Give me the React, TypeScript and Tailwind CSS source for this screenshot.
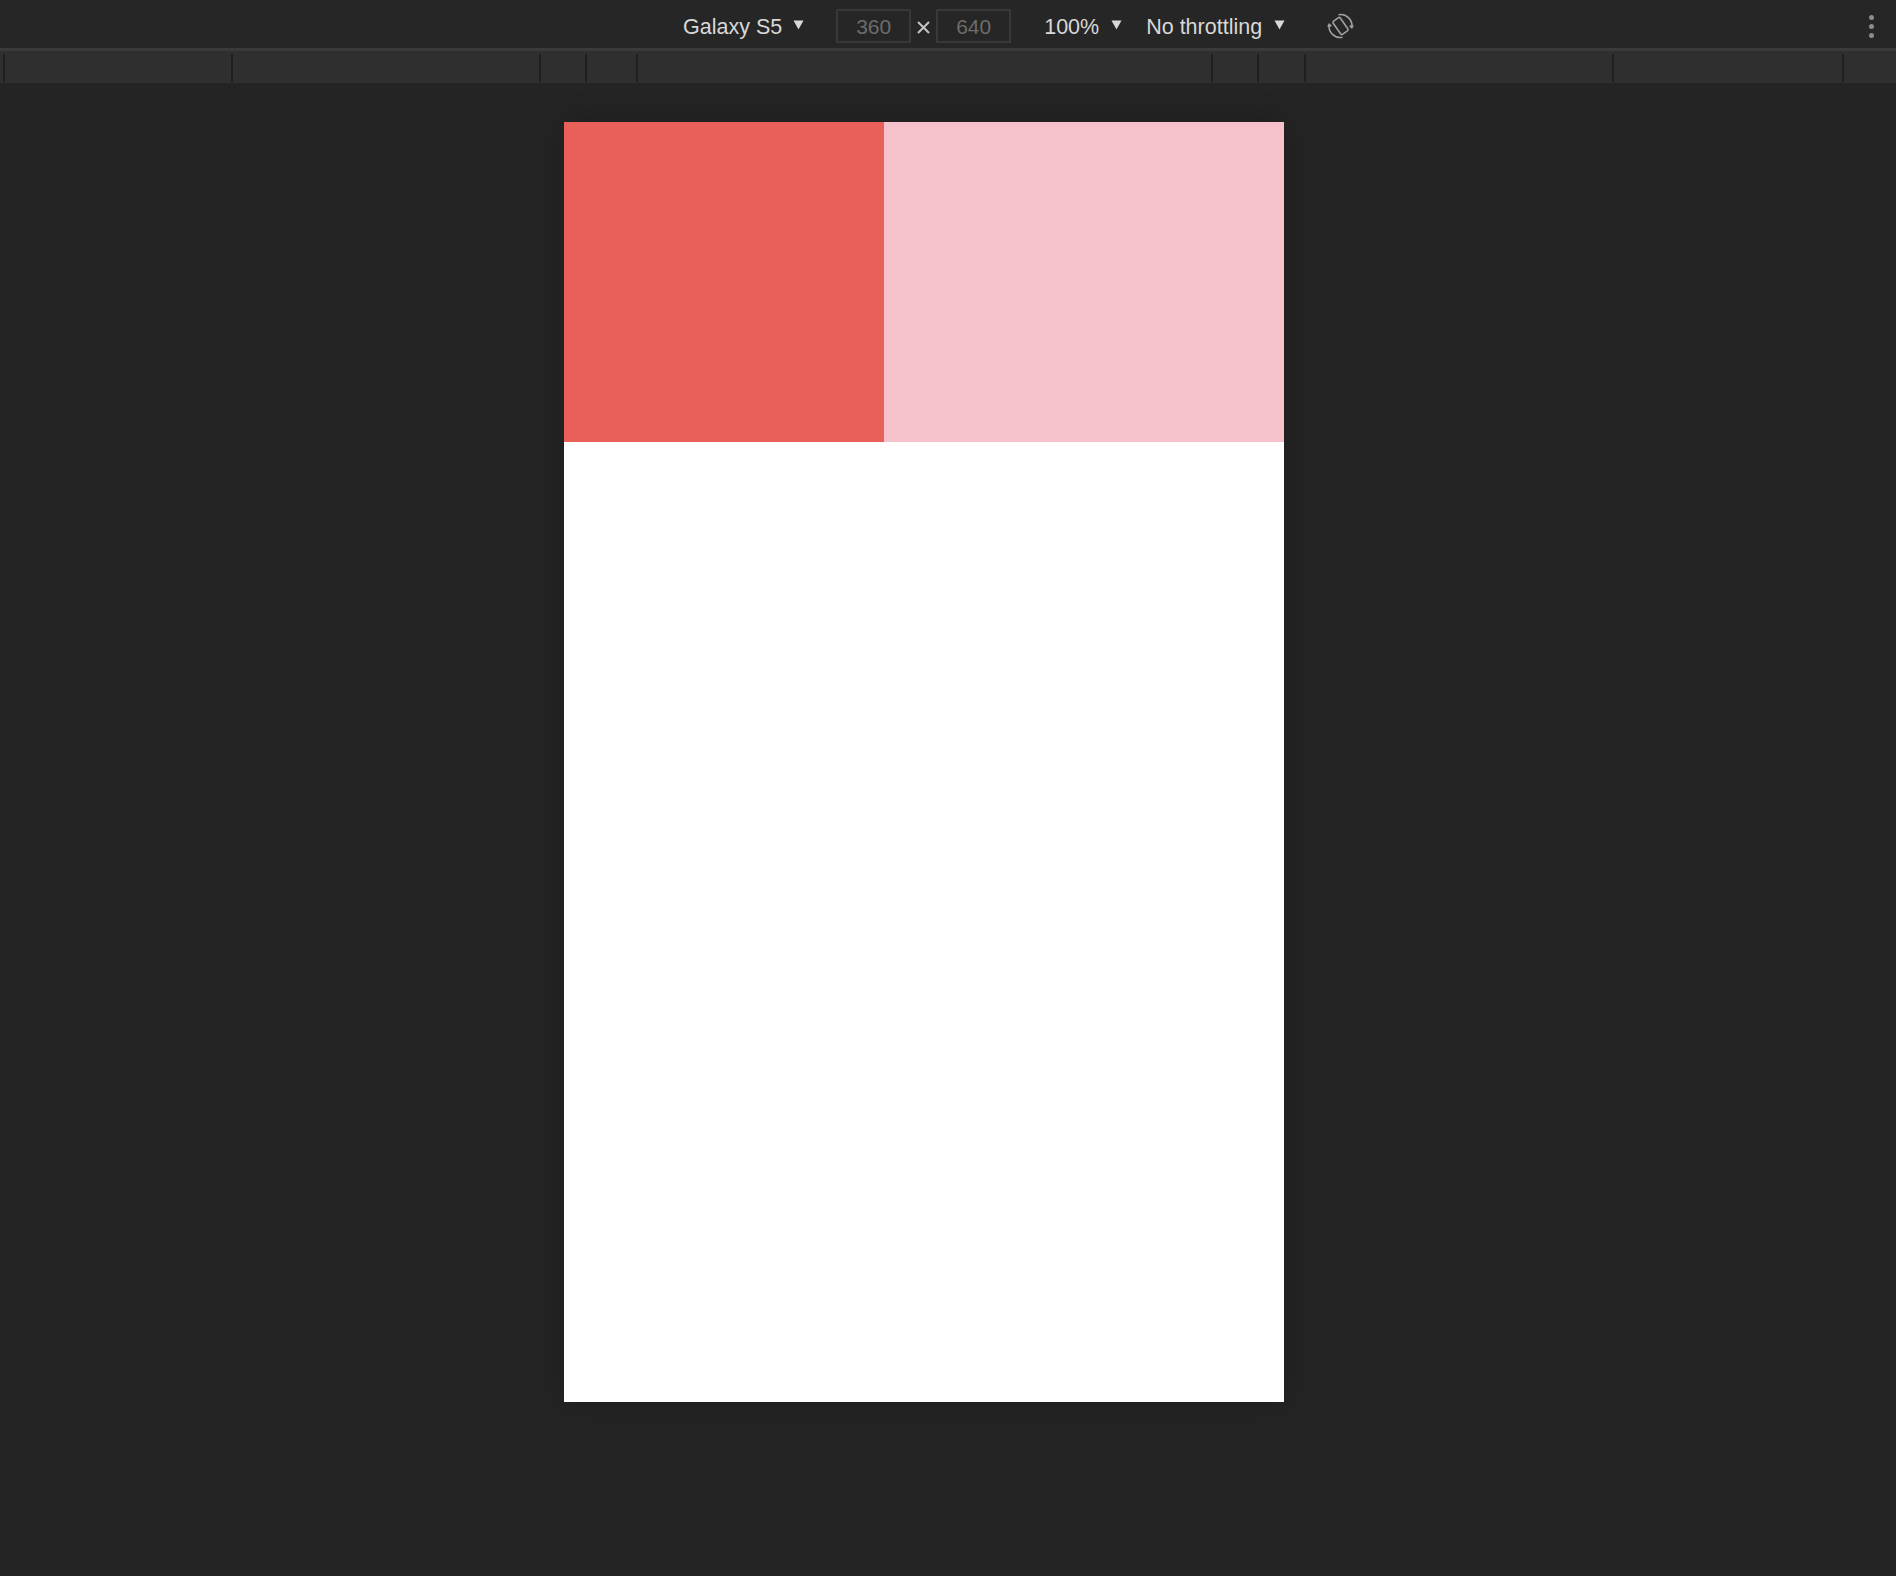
import React from 'react'

const rulerStops = [5, 228, 308, 46, 51, 575, 46, 47, 308, 230]

function Caret() {
  return (
    <svg width="11" height="10" viewBox="0 0 11 10" className="mb-[6px] shrink-0">
      <path d="M0.5 0.5 H10.5 L5.5 9.5 Z" fill="#d8d8d8" />
    </svg>
  )
}

function Times() {
  return (
    <svg width="13" height="13" viewBox="0 0 13 13" className="mt-[3px] shrink-0" stroke="#c4c4c4" strokeWidth="2">
      <path d="M1 1 L12 12 M12 1 L1 12" />
    </svg>
  )
}

function RotateIcon() {
  return (
    <svg width="27" height="26" viewBox="0 0 26 26" fill="none" stroke="#a0a0a0" strokeWidth="1.6">
      <rect x="8.6" y="5" width="8.8" height="16" rx="1.6" transform="rotate(-35 13 13)" />
      <path d="M11 1.7 A11.3 11.3 0 0 1 24.3 14.5" />
      <path d="M15 24.3 A11.3 11.3 0 0 1 1.7 11.5" />
      <path d="M22.2 12.6 L24.3 14.7 L25.6 12.2" />
      <path d="M3.8 13.4 L1.7 11.3 L0.4 13.8" />
    </svg>
  )
}

function SizeBox({ value }: { value: string }) {
  return (
    <div className="flex h-[34px] w-[75px] shrink-0 items-center justify-center border-2 border-[#383838] text-[21px] text-[#6c6c6c]">
      {value}
    </div>
  )
}

export default function App() {
  return (
    <div
      className="flex min-h-[1576px] w-full flex-col bg-[#242424]"
      style={{ fontFamily: '"Liberation Sans", Arial, sans-serif' }}
    >
      {/* Device toolbar */}
      <header className="flex h-[48px] shrink-0 bg-[#262626]">
        <div className="flex flex-1 items-center pt-[4px] text-[21.5px] leading-none text-[#d8d8d8]">
          <div className="mt-[3px] ml-[683px] flex items-center gap-[11px]">
            <span>Galaxy S5</span>
            <Caret />
          </div>
          <div className="ml-[32px] flex items-center gap-[6px]">
            <SizeBox value="360" />
            <Times />
            <SizeBox value="640" />
          </div>
          <div className="mt-[3px] ml-[33px] flex items-center gap-[12px]">
            <span>100%</span>
            <Caret />
          </div>
          <div className="mt-[3px] ml-[24px] flex items-center gap-[12px]">
            <span>No throttling</span>
            <Caret />
          </div>
          <div className="ml-[42px] flex items-center">
            <RotateIcon />
          </div>
        </div>
        <div className="flex w-[48px] shrink-0 flex-col items-center justify-center gap-[4px] pt-[4px] pr-[2px]">
          <span className="h-[5px] w-[5px] shrink-0 rounded-full bg-[#8c8c8c]" />
          <span className="h-[5px] w-[5px] shrink-0 rounded-full bg-[#8c8c8c]" />
          <span className="h-[5px] w-[5px] shrink-0 rounded-full bg-[#8c8c8c]" />
        </div>
      </header>
      <div className="h-[3px] shrink-0 bg-[#3a3a3a]" />

      {/* Media query ruler */}
      <div className="flex h-[32px] shrink-0 bg-[#2f2f2f] pt-[3px] pb-[1px]">
        {rulerStops.map((w, i) => (
          <div key={i} className="shrink-0 border-r-2 border-[#1f1f1f]" style={{ width: w }} />
        ))}
      </div>

      {/* Viewport */}
      <main className="flex flex-1 justify-start pt-[39px] pl-[564px]">
        <div className="flex h-[1280px] w-[720px] flex-col bg-white shadow-[0_0_30px_rgba(0,0,0,0.18)]">
          <div className="flex h-[320px] shrink-0">
            <div className="w-[320px] bg-[#e95f5a]" />
            <div className="flex-1 bg-[#f5c2cb]" />
          </div>
        </div>
      </main>
    </div>
  )
}
